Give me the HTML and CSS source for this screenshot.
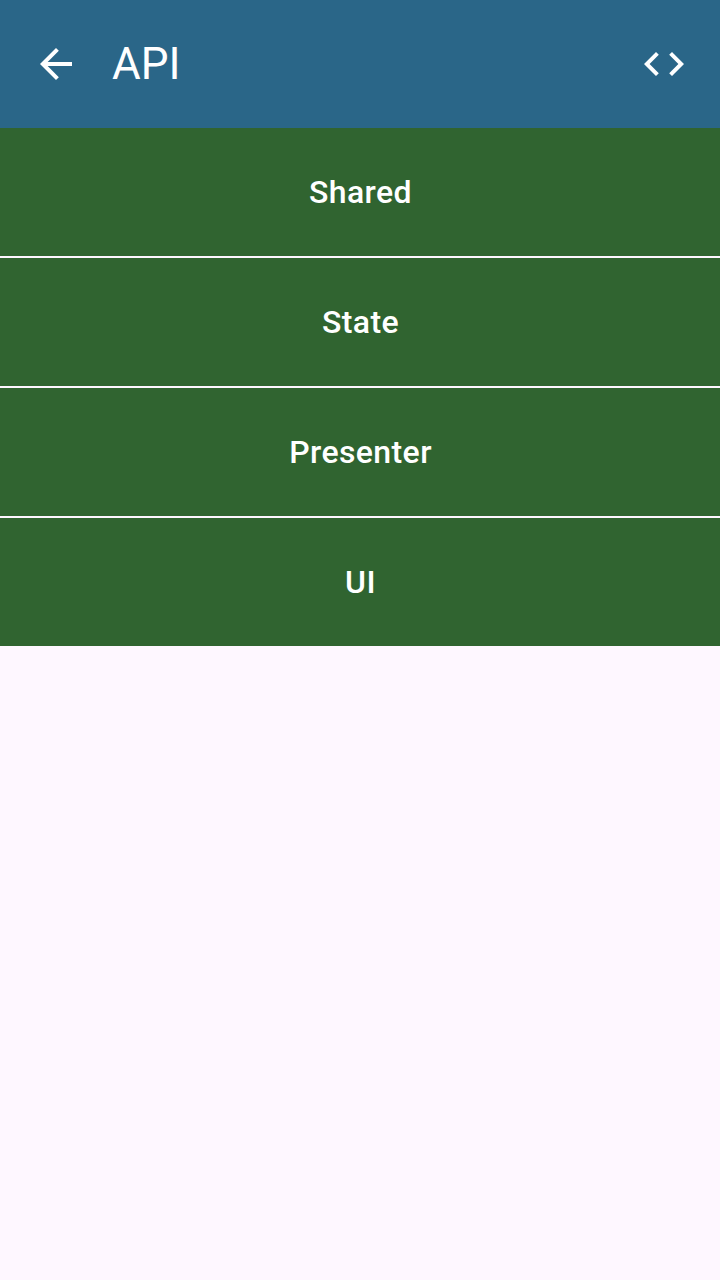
FILE: index.html
```html
<!DOCTYPE html>
<html lang="en">
<head>
<meta charset="utf-8">
<title>API</title>
<link rel="stylesheet" href="styles.css">
</head>
<body>
<header class="app-bar">
  <svg class="icon" viewBox="0 0 24 24" aria-label="Back"><path d="M20 11H7.83l5.59-5.59L12 4l-8 8 8 8 1.41-1.41L7.83 13H20v-2z"/></svg>
  <h1 class="title">API</h1>
  <svg class="icon" viewBox="0 0 24 24" aria-label="Source code"><path d="M9.4 16.6L4.8 12l4.6-4.6L8 6l-6 6 6 6 1.4-1.4zm5.2 0l4.6-4.6-4.6-4.6L16 6l6 6-6 6-1.4-1.4z"/></svg>
</header>
<main class="menu">
  <button class="item">Shared</button>
  <button class="item">State</button>
  <button class="item">Presenter</button>
  <button class="item">UI</button>
</main>
</body>
</html>
```
FILE: styles.css
```css
body {
  margin: 0;
  min-height: 100vh;
  background: #fef7ff;
  font-family: Roboto, sans-serif;
}

.app-bar {
  display: flex;
  align-items: center;
  box-sizing: border-box;
  height: 128px;
  padding: 0 32px;
  background: #2a6688;
  color: #fff;
}

.icon {
  width: 48px;
  height: 48px;
  fill: currentColor;
}

.title {
  flex: 1;
  margin: 0 0 0 32px;
  font-size: 44px;
  font-weight: 400;
  line-height: 56px;
}

.menu {
  display: flex;
  flex-direction: column;
  gap: 2px;
}

.item {
  height: 128px;
  padding: 0 0 0 1px;
  border: 0;
  background: #306430;
  color: #fff;
  font: 500 32px/48px Roboto, sans-serif;
  letter-spacing: 0.4px;
}
```
